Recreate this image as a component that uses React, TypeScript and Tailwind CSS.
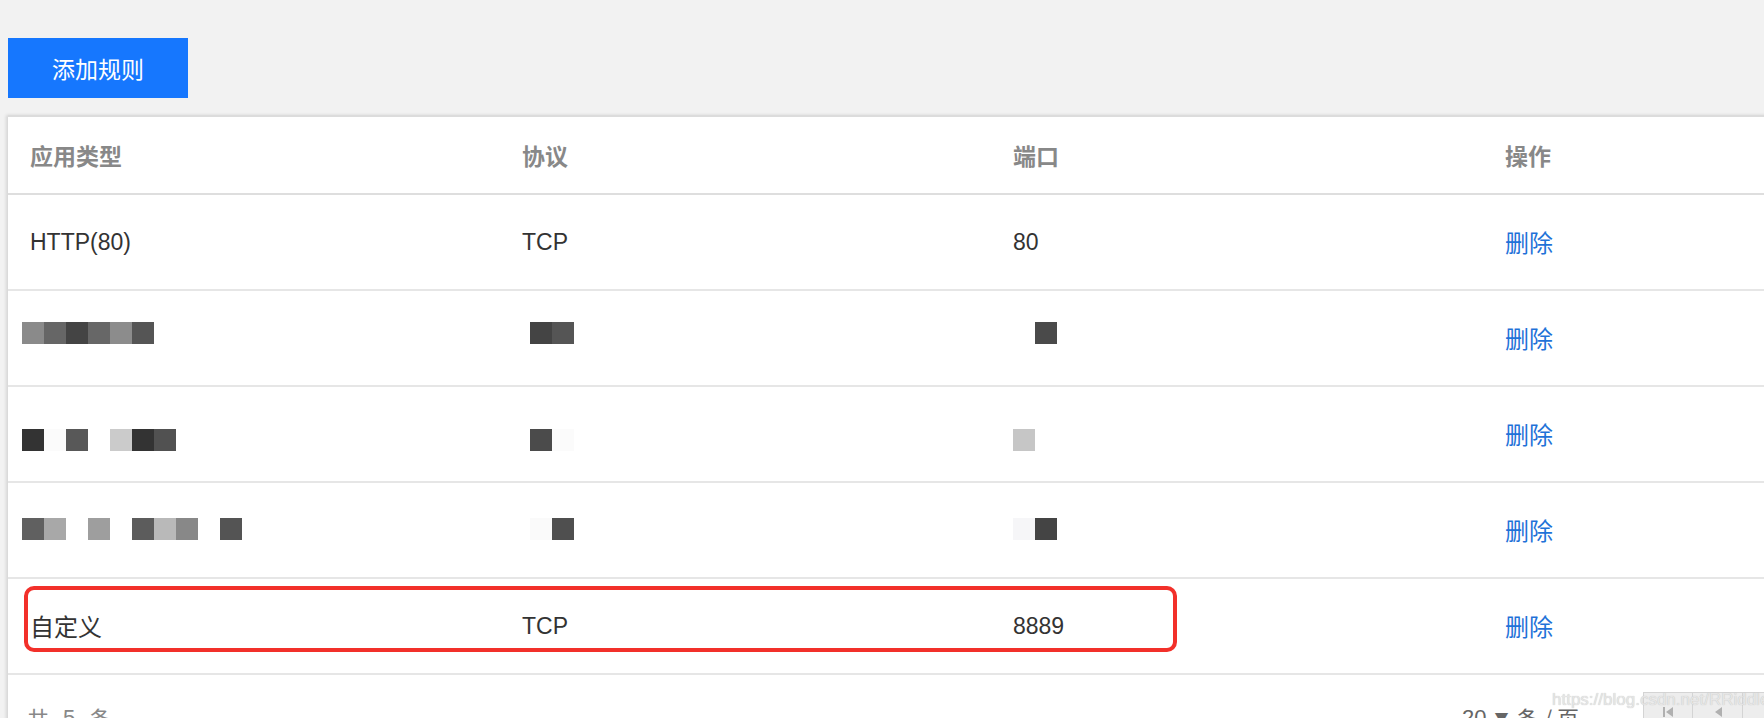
import React from 'react';

type Cell = { c: string } | null;

const FONT = "font-['Liberation_Sans','Noto_Sans_CJK_SC',sans-serif]";

// pixelated (masked) text cells, each 22px wide
function Mosaic({ cells, top }: { cells: Cell[]; top: string }) {
  return (
    <div className={`flex ${top}`}>
      {cells.map((cell, i) =>
        cell ? (
          <div key={i} className="w-[22px] h-[22px]" style={{ backgroundColor: cell.c }} />
        ) : (
          <div key={i} className="w-[22px] h-[22px]" />
        )
      )}
    </div>
  );
}

const c = (color: string): Cell => ({ c: color });

function DeleteLink() {
  return <span className="text-[24px] text-[#1f72d8] cursor-pointer font-['Noto_Sans_CJK_SC',sans-serif]">删除</span>;
}

function Row({ children }: { children: React.ReactNode }) {
  return (
    <div className="relative grid grid-cols-[492px_491px_492px_493px] h-[96px] border-b-2 border-[#e6e6e6]">
      {children}
    </div>
  );
}

export default function App() {
  return (
    <div className={`w-[1764px] h-[718px] overflow-hidden bg-[#f2f2f2] ${FONT}`}>
      <div className="pt-[38px] pl-[8px]">
        <button className="w-[180px] h-[60px] bg-[#1677fe] text-white text-[23px] font-['Noto_Sans_CJK_SC',sans-serif]">
          添加规则
        </button>

        <div className="mt-[17px] w-[1968px] bg-white border-t-2 border-[#dcdcdc] shadow-[-2px_0_3px_rgba(0,0,0,0.12)]">
          {/* header */}
          <div className="grid grid-cols-[492px_491px_492px_493px] h-[78px] items-center border-b-2 border-[#dedede] text-[23px] font-bold text-[#888] font-['Noto_Sans_CJK_SC',sans-serif]">
            <div className="pl-[22px]">应用类型</div>
            <div className="pl-[22px]">协议</div>
            <div className="pl-[22px]">端口</div>
            <div className="pl-[22px]">操作</div>
          </div>

          <Row>
            <div className="pl-[22px] flex items-center text-[23px] text-[#333]">HTTP(80)</div>
            <div className="pl-[22px] flex items-center text-[23px] text-[#333]">TCP</div>
            <div className="pl-[22px] flex items-center text-[23px] text-[#333]">80</div>
            <div className="pl-[22px] flex items-center"><DeleteLink /></div>
          </Row>

          <Row>
            <div className="pl-[14px]">
              <Mosaic top="mt-[31px]" cells={[c('#8a8a8a'), c('#666'), c('#444'), c('#676767'), c('#8c8c8c'), c('#555')]} />
            </div>
            <div className="pl-[30px]">
              <Mosaic top="mt-[31px]" cells={[c('#444'), c('#555')]} />
            </div>
            <div className="pl-[44px]">
              <Mosaic top="mt-[31px]" cells={[c('#4a4a4a')]} />
            </div>
            <div className="pl-[22px] flex items-center"><DeleteLink /></div>
          </Row>

          <Row>
            <div className="pl-[14px]">
              <Mosaic top="mt-[42px]" cells={[c('#333'), c('#fbfbfb'), c('#585858'), null, c('#cbcbcb'), c('#333'), c('#515151')]} />
            </div>
            <div className="pl-[30px]">
              <Mosaic top="mt-[42px]" cells={[c('#4b4b4b'), c('#fbfbfb')]} />
            </div>
            <div className="pl-[22px]">
              <Mosaic top="mt-[42px]" cells={[c('#c6c6c6')]} />
            </div>
            <div className="pl-[22px] flex items-center"><DeleteLink /></div>
          </Row>

          <Row>
            <div className="pl-[14px]">
              <Mosaic top="mt-[35px]" cells={[c('#606060'), c('#a8a8a8'), null, c('#9e9e9e'), null, c('#5c5c5c'), c('#b9b9b9'), c('#888'), null, c('#545454')]} />
            </div>
            <div className="pl-[30px]">
              <Mosaic top="mt-[35px]" cells={[c('#fafafa'), c('#4f4f4f')]} />
            </div>
            <div className="pl-[22px]">
              <Mosaic top="mt-[35px]" cells={[c('#f6f6f8'), c('#444')]} />
            </div>
            <div className="pl-[22px] flex items-center"><DeleteLink /></div>
          </Row>

          <Row>
            <div className="pl-[22px] flex items-center text-[24px] text-[#333] font-['Noto_Sans_CJK_SC',sans-serif]">自定义</div>
            <div className="pl-[22px] flex items-center text-[23px] text-[#333]">TCP</div>
            <div className="pl-[22px] flex items-center text-[23px] text-[#333]">8889</div>
            <div className="pl-[22px] flex items-center"><DeleteLink /></div>
            {/* highlight annotation */}
            <div className="absolute left-[16px] top-[7px] w-[1153px] h-[66px] border-4 border-[#f2302a] rounded-[10px] pointer-events-none" />
          </Row>

          {/* footer */}
          <div className="relative flex items-start h-[60px] pt-[26px] text-[22px] text-[#888]">
            <div className="w-[1454px] pl-[19px] flex gap-[14px] font-['Noto_Sans_CJK_SC',sans-serif]">
              <span>共</span>
              <span className={FONT}>5</span>
              <span>条</span>
            </div>
            <div className="w-[181px] flex items-center gap-[8px] text-[#666] font-['Noto_Sans_CJK_SC',sans-serif]">
              <span className={FONT}>20</span>
              <span className="text-[14px]">▼</span>
              <span>条 / 页</span>
            </div>
            <div className="flex mt-[-9px]">
              <div className="w-[50px] h-[40px] bg-[#ededed] border border-[#d4d4d4] flex items-center justify-center">
                <svg width="16" height="16" viewBox="0 0 16 16" fill="#b0b0b0">
                  <rect x="3" y="3" width="2" height="10" />
                  <path d="M13 3 L6 8 L13 13 Z" />
                </svg>
              </div>
              <div className="w-[50px] h-[40px] bg-[#ededed] border border-l-0 border-[#d4d4d4] flex items-center justify-center">
                <svg width="16" height="16" viewBox="0 0 16 16" fill="#b0b0b0">
                  <path d="M12 3 L5 8 L12 13 Z" />
                </svg>
              </div>
              <div className="w-[50px] h-[40px] bg-[#ededed] border border-l-0 border-[#d4d4d4]" />
            </div>
            <div className="absolute left-[1544px] top-[12px] text-[17px] text-[#e6e6e6] [text-shadow:0_0_1px_#bbb] font-['Liberation_Sans',sans-serif]">
              https://blog.csdn.net/RRiddle
            </div>
          </div>
        </div>
      </div>
    </div>
  );
}
